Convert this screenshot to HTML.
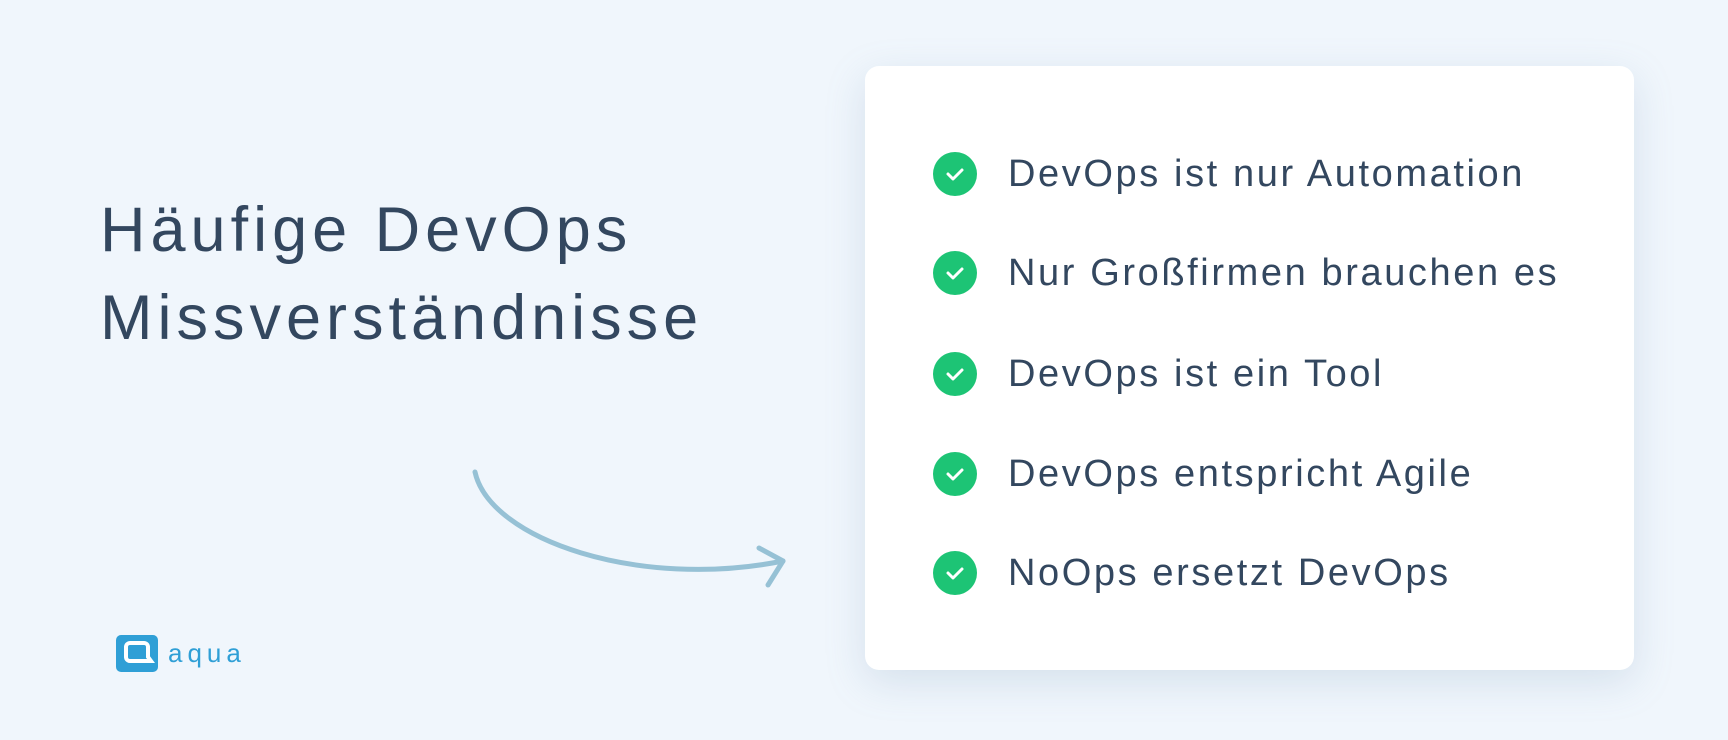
<!DOCTYPE html>
<html><head><meta charset="utf-8"><style>
html,body{margin:0;padding:0}
body{width:1728px;height:740px;background:#f0f6fc;font-family:"Liberation Sans",sans-serif;position:relative;overflow:hidden}
.title{position:absolute;left:100px;top:186px;font-size:63px;line-height:88px;color:#33475f;letter-spacing:5px}
.card{position:absolute;left:865px;top:66px;width:769px;height:604px;background:#fff;border-radius:14px;box-shadow:0 12px 40px rgba(120,150,180,.22)}
.item{position:absolute;left:68px;height:44px;display:flex;align-items:center;font-size:38px;color:#33475f;letter-spacing:2.6px}
.chk{width:44px;height:44px;border-radius:50%;background:#1dc475;margin-right:31px;flex:none;display:flex;align-items:center;justify-content:center}
</style></head><body>
<div class="title">Häufige DevOps<br>Missverständnisse</div>
<svg style="position:absolute;left:0;top:0" width="1728" height="740">
<path d="M475,472 C490,540 640,590 783,561" fill="none" stroke="#96c1d5" stroke-width="5" stroke-linecap="round"/>
<path d="M759,548 L783,561 L768,585" fill="none" stroke="#96c1d5" stroke-width="5" stroke-linecap="round" stroke-linejoin="round"/>
<rect x="116" y="635" width="42" height="37" rx="5" fill="#2f9fd6"/>
<path d="M130,643 h14 a4,4 0 0 1 4,4 v10 l3,4 h-21 a4,4 0 0 1 -4,-4 v-10 a4,4 0 0 1 4,-4z" fill="none" stroke="#fff" stroke-width="4"/>
<text x="168" y="662" font-family="Liberation Sans" font-size="26" fill="#2f9fd6" letter-spacing="5">aqua</text>
</svg>
<div class="card">
<div class="item" style="top:86px"><div class="chk"><svg width="22" height="22"><path d="M4,11 l5,5 l9,-9" fill="none" stroke="#fff" stroke-width="3" stroke-linecap="round" stroke-linejoin="round"/></svg></div>DevOps ist nur Automation</div>
<div class="item" style="top:185px"><div class="chk"><svg width="22" height="22"><path d="M4,11 l5,5 l9,-9" fill="none" stroke="#fff" stroke-width="3" stroke-linecap="round" stroke-linejoin="round"/></svg></div>Nur Großfirmen brauchen es</div>
<div class="item" style="top:286px"><div class="chk"><svg width="22" height="22"><path d="M4,11 l5,5 l9,-9" fill="none" stroke="#fff" stroke-width="3" stroke-linecap="round" stroke-linejoin="round"/></svg></div>DevOps ist ein Tool</div>
<div class="item" style="top:386px"><div class="chk"><svg width="22" height="22"><path d="M4,11 l5,5 l9,-9" fill="none" stroke="#fff" stroke-width="3" stroke-linecap="round" stroke-linejoin="round"/></svg></div>DevOps entspricht Agile</div>
<div class="item" style="top:485px"><div class="chk"><svg width="22" height="22"><path d="M4,11 l5,5 l9,-9" fill="none" stroke="#fff" stroke-width="3" stroke-linecap="round" stroke-linejoin="round"/></svg></div>NoOps ersetzt DevOps</div>
</div>
</body></html>
